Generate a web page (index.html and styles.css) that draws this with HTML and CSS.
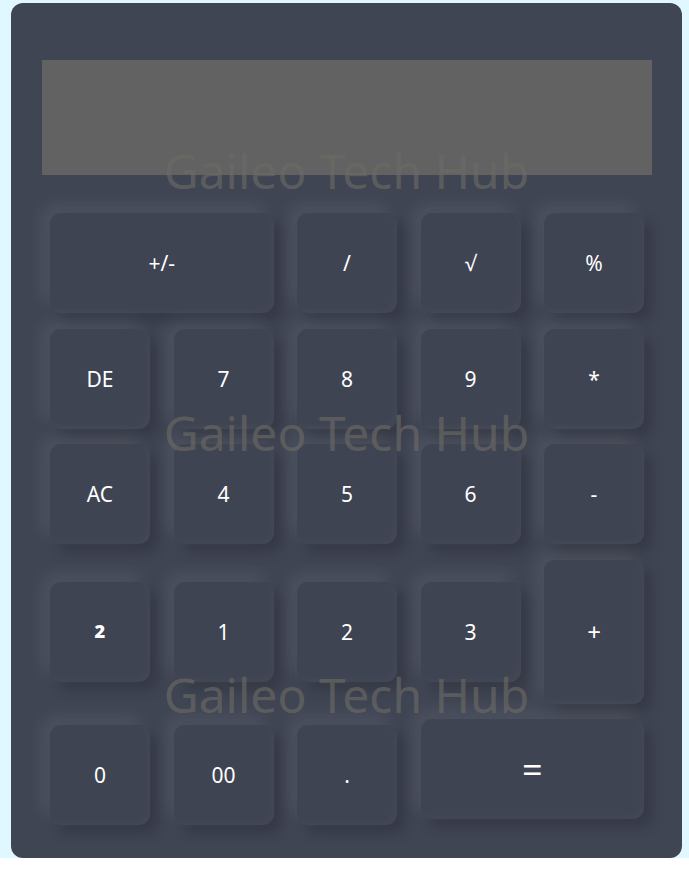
FILE: index.html
```html
<!DOCTYPE html>
<html>
<head>
<meta charset="utf-8">
<link rel="stylesheet" href="styles.css">
</head>
<body>
<div class="calc">
  <div class="display"></div>
  <div class="keys">
    <button class="key wide">+/-</button>
    <button class="key">/</button>
    <button class="key">√</button>
    <button class="key">%</button>

    <button class="key">DE</button>
    <button class="key">7</button>
    <button class="key">8</button>
    <button class="key">9</button>
    <button class="key">*</button>

    <button class="key">AC</button>
    <button class="key">4</button>
    <button class="key">5</button>
    <button class="key">6</button>
    <button class="key">-</button>

    <button class="key sq">²</button>
    <button class="key">1</button>
    <button class="key">2</button>
    <button class="key">3</button>
    <button class="key tall">+</button>

    <button class="key low">0</button>
    <button class="key low">00</button>
    <button class="key low">.</button>
    <button class="key wide top eq">=</button>
  </div>
  <div class="watermark">
    <span class="wm wm1">Gaileo Tech Hub</span>
    <span class="wm">Gaileo Tech Hub</span>
    <span class="wm">Gaileo Tech Hub</span>
  </div>
</div>
</body>
</html>
```
FILE: styles.css
```css
html {
  background: #ffffff;
}
body {
  margin: 0;
  padding: 3px 0 0 11px;
  background: #e1f7ff;
  font-family: "Noto Sans", "Open Sans", sans-serif;
}
.calc {
  position: relative;
  box-sizing: border-box;
  width: 671px;
  height: 855px;
  padding: 57px 38px 0 39px;
  background: #404554;
  border-radius: 12px;
  overflow: hidden;
}
.display {
  height: 115px;
  margin: 0 -8px;
  background: #626262;
}
.keys {
  margin-top: 38px;
  display: grid;
  grid-template-columns: repeat(5, 100px);
  grid-template-rows: 100px 100px 100px 144px 106px;
  column-gap: 23.5px;
  row-gap: 15.5px;
}
.key {
  width: 100%;
  height: 100px;
  align-self: center;
  border: none;
  border-radius: 11px;
  background: #3f4453;
  color: #ffffff;
  font-family: "Noto Sans", "Open Sans", sans-serif;
  font-size: 21px;
  padding: 0;
  box-shadow: -8px -8px 18px rgba(255, 255, 255, 0.075),
              8px 8px 14px rgba(0, 0, 0, 0.18),
              inset -3px -3px 8px rgba(255, 255, 255, 0.025);
}
.wide {
  grid-column: span 2;
}
.tall {
  height: 144px;
  font-size: 24px;
}
.low {
  align-self: end;
}
.top {
  align-self: start;
}
.eq {
  font-size: 36px;
}
.sq {
  font-size: 30px;
  line-height: 1;
  padding-top: 14px;
  font-weight: bold;
}
.watermark {
  position: absolute;
  left: 0;
  right: 0;
  top: 0;
  bottom: 0;
  pointer-events: none;
  display: flex;
  flex-direction: column;
  align-items: center;
}
.wm {
  flex-shrink: 0;
  font-size: 48px;
  line-height: 60px;
  height: 262px;
  color: rgba(108, 106, 100, 0.65);
  white-space: nowrap;
}
.wm1 {
  margin-top: 138px;
}
```
